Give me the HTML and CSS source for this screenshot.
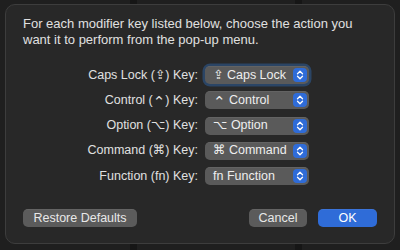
FILE: index.html
```html
<!DOCTYPE html>
<html>
<head>
<meta charset="utf-8">
<link rel="stylesheet" href="styles.css">
</head>
<body>
<div class="dialog">
  <p class="intro">For each modifier key listed below, choose the action you want it to perform from the pop-up menu.</p>
  <div class="rows">
    <div class="label">Caps Lock (<span class="sym">⇪</span>) Key:</div>
    <div class="popup focused"><span class="ptext"><span class="sym">⇪</span> Caps Lock</span><span class="stepper"><svg width="8" height="10" viewBox="0 0 8 10"><path d="M1.5 3.8 L4 1.3 L6.5 3.8 M1.5 6.2 L4 8.7 L6.5 6.2" fill="none" stroke="#fff" stroke-width="1.3" stroke-linecap="round" stroke-linejoin="round"/></svg></span></div>
    <div class="label">Control (<span class="sym ctl">⌃</span>) Key:</div>
    <div class="popup"><span class="ptext"><span class="sym ctl">⌃</span> Control</span><span class="stepper"><svg width="8" height="10" viewBox="0 0 8 10"><path d="M1.5 3.8 L4 1.3 L6.5 3.8 M1.5 6.2 L4 8.7 L6.5 6.2" fill="none" stroke="#fff" stroke-width="1.3" stroke-linecap="round" stroke-linejoin="round"/></svg></span></div>
    <div class="label">Option (<span class="sym">⌥</span>) Key:</div>
    <div class="popup"><span class="ptext"><span class="sym">⌥</span> Option</span><span class="stepper"><svg width="8" height="10" viewBox="0 0 8 10"><path d="M1.5 3.8 L4 1.3 L6.5 3.8 M1.5 6.2 L4 8.7 L6.5 6.2" fill="none" stroke="#fff" stroke-width="1.3" stroke-linecap="round" stroke-linejoin="round"/></svg></span></div>
    <div class="label">Command (<span class="sym">⌘</span>) Key:</div>
    <div class="popup"><span class="ptext"><span class="sym">⌘</span> Command</span><span class="stepper"><svg width="8" height="10" viewBox="0 0 8 10"><path d="M1.5 3.8 L4 1.3 L6.5 3.8 M1.5 6.2 L4 8.7 L6.5 6.2" fill="none" stroke="#fff" stroke-width="1.3" stroke-linecap="round" stroke-linejoin="round"/></svg></span></div>
    <div class="label">Function (fn) Key:</div>
    <div class="popup"><span class="ptext">fn Function</span><span class="stepper"><svg width="8" height="10" viewBox="0 0 8 10"><path d="M1.5 3.8 L4 1.3 L6.5 3.8 M1.5 6.2 L4 8.7 L6.5 6.2" fill="none" stroke="#fff" stroke-width="1.3" stroke-linecap="round" stroke-linejoin="round"/></svg></span></div>
  </div>
  <div class="buttons">
    <button class="btn restore">Restore Defaults</button>
    <div class="spacer"></div>
    <button class="btn cancel">Cancel</button>
    <button class="btn ok">OK</button>
  </div>
</div>
</body>
</html>
```
FILE: styles.css
```css
html, body {
  margin: 0;
  padding: 0;
}
body {
  width: 400px;
  height: 250px;
  overflow: hidden;
  background:
    linear-gradient(to right, transparent 130px, #161616 130px, #161616 137px, transparent 137px, transparent 295px, #161616 295px, #161616 302px, transparent 302px),
    #1f1f1f;
  font-family: "Liberation Sans", Arial, "DejaVu Sans", sans-serif;
  font-size: 12.5px;
  color: #dedede;
  padding-top: 4px;
  box-sizing: border-box;
}
.dialog {
  margin: 0 5px;
  height: 240px;
  box-sizing: border-box;
  border: 1px solid #3d3d3d;
  border-radius: 10px;
  background: #282828;
  padding: 11px 17px 16px 17px;
  display: flex;
  flex-direction: column;
}
.intro {
  margin: 0;
  padding-right: 24px;
  font-size: 13px;
  line-height: 16px;
  color: #e0e0e0;
}
.sym {
  font-family: "DejaVu Sans", sans-serif;
  font-size: 12.5px;
  line-height: 0;
}
.sym.ctl {
  font-size: 15px;
  vertical-align: -3px;
}
.rows {
  margin-top: 18px;
  display: grid;
  grid-template-columns: 1fr 104px;
  grid-auto-rows: 18px;
  row-gap: 7.3px;
  column-gap: 7px;
  padding-right: 68px;
  align-items: center;
}
.label {
  text-align: right;
  color: #e0e0e0;
  white-space: nowrap;
  line-height: 15px;
}
.popup {
  height: 18px;
  box-sizing: border-box;
  background: #5a5a5a;
  border-radius: 5px;
  display: flex;
  align-items: center;
  padding: 0 2px 0 8px;
  color: #eeeeee;
  line-height: 15px;
  box-shadow: inset 0 0.5px 0 rgba(255,255,255,0.12);
}
.popup.focused {
  box-shadow: 0 0 0 2.5px #2b4565, inset 0 0.5px 0 rgba(255,255,255,0.12);
}
.ptext {
  flex: 1;
  white-space: nowrap;
}
.stepper {
  width: 14px;
  height: 14px;
  border-radius: 4px;
  background: #2f6cd8;
  display: flex;
  align-items: center;
  justify-content: center;
}
.buttons {
  margin-top: auto;
  display: flex;
  align-items: center;
  gap: 11px;
}
.spacer {
  flex: 1;
}
.btn {
  height: 18px;
  border: none;
  border-radius: 5px;
  background: #5b5b5b;
  color: #e8e8e8;
  font-family: inherit;
  font-size: 12.5px;
  padding: 0;
  box-shadow: inset 0 0.5px 0 rgba(255,255,255,0.12);
}
.restore { width: 114px; }
.cancel { width: 58px; }
.ok {
  width: 59px;
  background: #2f6cd8;
  color: #fff;
}
```
